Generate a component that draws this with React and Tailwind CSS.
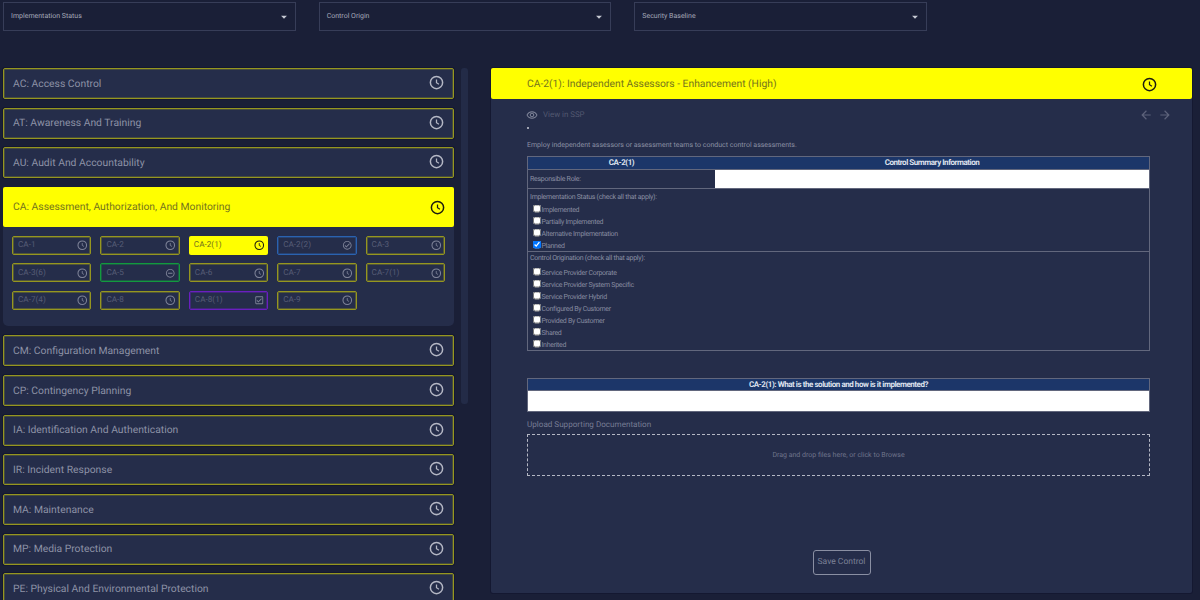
import {
  MdArrowBack,
  MdArrowDropDown,
  MdArrowForward,
  MdOutlineCheckBox,
  MdOutlineCheckCircle,
  MdOutlineRemoveCircleOutline,
  MdOutlineRemoveRedEye,
} from "react-icons/md";

const filters = ["Implementation Status", "Control Origin", "Security Baseline"];

const familiesBefore = ["AC: Access Control", "AT: Awareness And Training", "AU: Audit And Accountability"];

const familiesAfter = [
  "CM: Configuration Management",
  "CP: Contingency Planning",
  "IA: Identification And Authentication",
  "IR: Incident Response",
  "MA: Maintenance",
  "MP: Media Protection",
  "PE: Physical And Environmental Protection",
];

const controls = [
  { name: "CA-1" },
  { name: "CA-2" },
  { name: "CA-2(1)", active: true },
  { name: "CA-2(2)", status: "done" },
  { name: "CA-3" },
  { name: "CA-3(6)" },
  { name: "CA-5", status: "na" },
  { name: "CA-6" },
  { name: "CA-7" },
  { name: "CA-7(1)" },
  { name: "CA-7(4)" },
  { name: "CA-8" },
  { name: "CA-8(1)", status: "review" },
  { name: "CA-9" },
];

const implementation = [
  { label: "Implemented" },
  { label: "Partially Implemented" },
  { label: "Alternative Implementation" },
  { label: "Planned", checked: true },
];

const origination = [
  "Service Provider Corporate",
  "Service Provider System Specific",
  "Service Provider Hybrid",
  "Configured By Customer",
  "Provided By Customer",
  "Shared",
  "Inherited",
];

function Filter({ label }) {
  return (
    <div className="flex h-[29px] w-[292.67px] items-start justify-between border border-[#373d58] pl-[7px] pr-[4px] pt-[7px] text-[7px] leading-[12px] text-[#a4a8b8]">
      <span>{label}</span>
      <MdArrowDropDown className="text-[14px] text-[#c8cad4]" />
    </div>
  );
}

function ClockIcon({ className }) {
  return (
    <svg viewBox="0 0 24 24" fill="none" stroke="currentColor" className={className}>
      <circle cx="12" cy="12" r="9.8" strokeWidth="2.4" />
      <path d="M12 7v5.4l3.9 2.3" strokeWidth="2" />
    </svg>
  );
}

function FamilyRow({ label }) {
  return (
    <div className="flex h-[31px] shrink-0 items-center justify-between rounded-[2px] border border-[#96961f] bg-[#252d4a] pl-[9px] pr-[9px] text-[10.35px] text-[#8d92a6] shadow-[0_0_0_1px_#141831,inset_0_0_0_1px_rgba(150,150,31,0.3)]">
      <span>{label}</span>
      <ClockIcon className="mb-[2px] h-[15px] w-[15px] text-[#b4b7c4]" />
    </div>
  );
}

function ControlChip({ control }) {
  if (control.active) {
    return (
      <div className="flex h-[19px] items-center justify-between rounded-[2px] bg-[#ffff00] pl-[5px] pr-[4px] text-[8.2px] text-[#74741e]">
        <span>{control.name}</span>
        <ClockIcon className="h-[10.5px] w-[10.5px] text-[#1c1c10]" />
      </div>
    );
  }

  let border = "border-[#96961f] shadow-[inset_0_0_0_1px_rgba(150,150,31,0.4)]";
  let Icon = ClockIcon;
  if (control.status === "done") {
    border = "border-[#2a62b0] shadow-[inset_0_0_0_1px_rgba(42,98,176,0.4)]";
    Icon = MdOutlineCheckCircle;
  }
  if (control.status === "na") {
    border = "border-[#129a3e] shadow-[inset_0_0_0_1px_rgba(18,154,62,0.4)]";
    Icon = MdOutlineRemoveCircleOutline;
  }
  if (control.status === "review") {
    border = "border-[#6a1fc0] shadow-[inset_0_0_0_1px_rgba(106,31,192,0.4)]";
    Icon = MdOutlineCheckBox;
  }

  return (
    <div className={`flex h-[19px] items-center justify-between rounded-[2px] border ${border} pl-[5px] pr-[3px] text-[8.2px] text-[#565c75]`}>
      <span>{control.name}</span>
      <Icon className="h-[10.5px] w-[10.5px] text-[#7e8398]" />
    </div>
  );
}

function CheckRow({ label, checked }) {
  return (
    <div className="flex h-[12px] items-center pl-[5px]">
      <input type="checkbox" readOnly checked={!!checked} className="m-0 h-[8px] w-[8px] -translate-y-[1.5px]" />
      <span className="ml-[0.5px] text-[7px] tracking-[-0.3px] text-[#878ca0]">{label}</span>
    </div>
  );
}

export default function App() {
  return (
    <div className="h-[600px] w-[1200px] overflow-hidden bg-[#1a1f37] font-['Roboto',sans-serif] antialiased [text-rendering:geometricPrecision]">
      {/* filters */}
      <div className="flex gap-[23px] pl-[3px] pt-[2px]">
        {filters.map((f) => (
          <Filter key={f} label={f} />
        ))}
      </div>

      <div className="mt-[37px] flex pl-[3px]">
        {/* families list */}
        <div className="flex w-[451px] shrink-0 flex-col">
          <div className="flex flex-col gap-[8.67px]">
            {familiesBefore.map((f) => (
              <FamilyRow key={f} label={f} />
            ))}
          </div>

          <div className="mt-[9px] rounded-[5px] bg-[#252d4a] pb-[16px]">
            <div className="flex h-[39.5px] items-center justify-between rounded-[2px] bg-[#ffff00] pl-[10px] pr-[9px] text-[10.35px] text-[#74741e]">
              <span>CA: Assessment, Authorization, And Monitoring</span>
              <ClockIcon className="h-[15px] w-[15px] text-[#1c1c10]" />
            </div>
            <div className="mt-[9px] grid grid-cols-5 gap-x-[9px] gap-y-[8.5px] px-[9px]">
              {controls.map((c) => (
                <ControlChip key={c.name} control={c} />
              ))}
            </div>
          </div>

          <div className="mt-[9.5px] flex flex-col gap-[8.67px]">
            {familiesAfter.map((f) => (
              <FamilyRow key={f} label={f} />
            ))}
          </div>
        </div>

        {/* scrollbar */}
        <div className="ml-[7px] h-[336px] w-[7px] shrink-0 rounded-[3px] bg-[#232b47]" />

        {/* control detail */}
        <div className="ml-[23px] flex h-[525px] w-[701px] shrink-0 flex-col rounded-[2px] bg-[#252d4a] shadow-[0_0_0_1px_#141831]">
          <div className="flex h-[31px] shrink-0 items-center justify-between rounded-[2px] bg-[#ffff00] pl-[36px] pr-[35px] pt-[1px] text-[10.3px] text-[#74741e]">
            <span>CA-2(1): Independent Assessors - Enhancement (High)</span>
            <ClockIcon className="h-[15px] w-[15px] text-[#1c1c10]" />
          </div>

          <div className="flex flex-1 flex-col pl-[36px] pr-[42px]">
            <div className="mt-[9px] flex h-[14px] items-center justify-between">
              <div className="-ml-[1px] flex items-center gap-[5px] text-[7.9px] text-[#535971]">
                <MdOutlineRemoveRedEye className="text-[12px] text-[#7e8398]" />
                <span>View in SSP</span>
              </div>
              <div className="-mr-[22px] flex gap-[5px] text-[14px] text-[#5d637b]">
                <MdArrowBack />
                <MdArrowForward />
              </div>
            </div>
            <div className="mt-[5px] h-[2px] w-[2px] rounded-full bg-[#c9cbd6]" />
            <p className="mt-[10px] text-[7px] leading-[12px] text-[#8a8fa3]">
              Employ independent assessors or assessment teams to conduct control assessments.
            </p>

            {/* summary table */}
            <div className="mt-[5px] border border-[#62677d] text-[#8a8fa3]">
              <div className="grid h-[12px] grid-cols-[187px_1fr] bg-[#1c3669] text-center text-[8px] leading-[12px] font-bold tracking-[-0.46px] text-[#dfe3ee]">
                <div>CA-2(1)</div>
                <div>Control Summary Information</div>
              </div>
              <div className="grid h-[19px] grid-cols-[187px_1fr] border-t border-[#62677d]">
                <div className="pl-[2px] text-[7px] leading-[18px] tracking-[-0.27px]">Responsible Role:</div>
                <div className="bg-white" />
              </div>
              <div className="h-[63px] border-t border-[#62677d]">
                <div className="h-[15px] pl-[2px] text-[7px] leading-[16px] tracking-[-0.27px]">Implementation Status (check all that apply):</div>
                {implementation.map((r) => (
                  <CheckRow key={r.label} label={r.label} checked={r.checked} />
                ))}
              </div>
              <div className="h-[99px] border-t border-[#62677d]">
                <div className="h-[15px] pl-[2px] text-[7px] leading-[12px] tracking-[-0.27px]">Control Origination (check all that apply):</div>
                {origination.map((r) => (
                  <CheckRow key={r} label={r} />
                ))}
              </div>
            </div>

            {/* solution table */}
            <div className="mt-[27px] border border-[#62677d]">
              <div className="h-[11px] bg-[#1c3669] text-center text-[8px] leading-[11px] font-bold tracking-[-0.45px] text-[#dfe3ee]">
                CA-2(1): What is the solution and how is it implemented?
              </div>
              <div className="h-[21px] border-t border-[#62677d] bg-white" />
            </div>

            <div className="mt-[6px] text-[8.1px] leading-[12px] text-[#767c94]">Upload Supporting Documentation</div>

            <div className="mt-[4px] flex h-[42px] items-center justify-center border border-dashed border-[#b4b7c4] text-[7px] text-[#6f748b]">
              Drag and drop files here, or click to Browse
            </div>

            <div className="mt-[74px] flex justify-center pl-[6px]">
              <div className="flex h-[25px] w-[58px] items-center justify-center rounded-[3px] border border-[#8a8fa3] text-[8.5px] text-[#7b8096]">
                Save Control
              </div>
            </div>
          </div>
        </div>
      </div>
    </div>
  );
}
